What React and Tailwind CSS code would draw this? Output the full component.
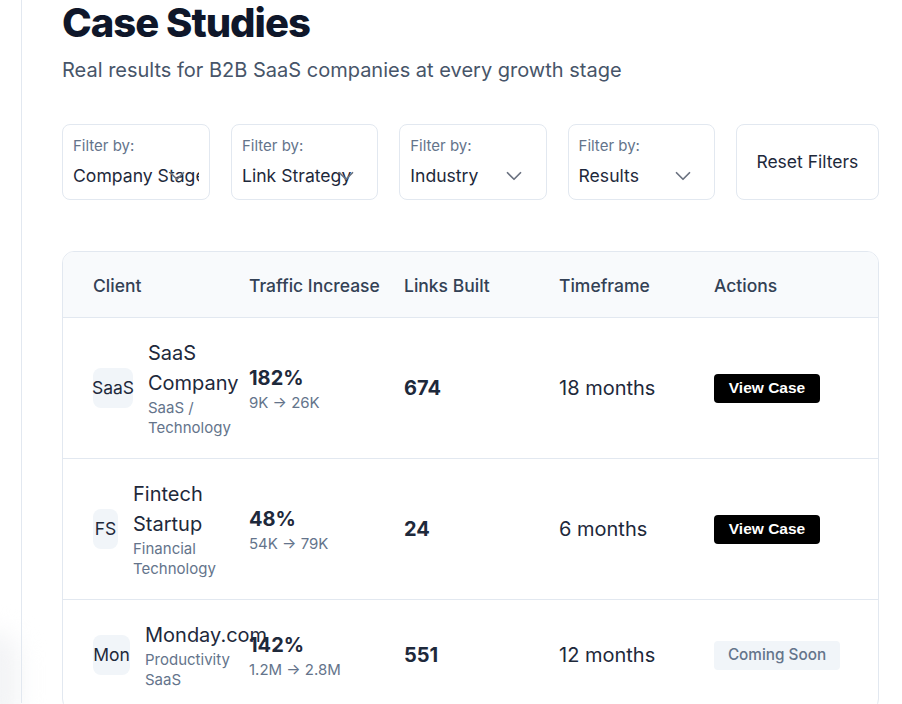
import { ChevronDown } from "lucide-react";

const filters = [
  { label: "Filter by:", value: "Company Stage" },
  { label: "Filter by:", value: "Link Strategy" },
  { label: "Filter by:", value: "Industry" },
  { label: "Filter by:", value: "Results" },
];

const rows = [
  {
    logo: "SaaS",
    logoW: "w-10",
    name: "SaaS Company",
    sector: "SaaS / Technology",
    traffic: "182%",
    range: "9K → 26K",
    links: "674",
    time: "18 months",
    ready: true,
  },
  {
    logo: "FS",
    logoW: "w-[25px]",
    name: "Fintech Startup",
    sector: "Financial Technology",
    traffic: "48%",
    range: "54K → 79K",
    links: "24",
    time: "6 months",
    ready: true,
  },
  {
    logo: "Mon",
    logoW: "w-[37px]",
    name: "Monday.com",
    sector: "Productivity SaaS",
    traffic: "142%",
    range: "1.2M → 2.8M",
    links: "551",
    time: "12 months",
    ready: false,
  },
];

const cols = "grid grid-cols-[156px_155px_155px_155px_1fr]";

function FilterBox({ label, value }) {
  return (
    <div className="w-[148px] h-[76px] rounded-lg border border-[#e2e8f0] bg-white px-[10px] pt-[11px]">
      <p className="text-[15px] leading-5 text-[#64748b]">{label}</p>
      <div className="relative mt-[8px]">
        <p className="text-[17.6px] leading-6 text-[#1e293b] whitespace-nowrap overflow-hidden">
          {value}
        </p>
        <ChevronDown
          className="absolute -top-px left-[91px] w-[26px] h-[26px] text-[#6b7280]"
          strokeWidth={1.6}
        />
      </div>
    </div>
  );
}

function CaseRow({ row, last }) {
  return (
    <div className={`${cols} items-center pl-[30px] py-5 ${last ? "" : "border-b border-[#e2e8f0]"}`}>
      {/* Client */}
      <div className="flex items-center gap-[15px] pr-[8px]">
        <div
          className={`${row.logoW} h-10 shrink-0 rounded-lg bg-[#f1f5f9] flex items-center justify-center text-[17.5px] text-[#1e293b] whitespace-nowrap`}
        >
          {row.logo}
        </div>
        <div className="min-w-0">
          <p className="text-[20px] leading-[30px] text-[#1e293b]">{row.name}</p>
          <p className="text-[15px] leading-5 text-[#64748b] w-[90px]">{row.sector}</p>
        </div>
      </div>

      {/* Traffic */}
      <div>
        <p className="text-[20px] leading-[30px] font-bold text-[#1e293b]">{row.traffic}</p>
        <p className="text-[15px] leading-5 text-[#64748b]">{row.range}</p>
      </div>

      <p className="text-[20px] font-bold text-[#1e293b]">{row.links}</p>
      <p className="text-[20px] text-[#1e293b]">{row.time}</p>

      <div>
        {row.ready ? (
          <button className="h-[29px] w-[106px] rounded-[4px] bg-black text-white text-[15.5px] font-bold font-['Liberation_Sans',sans-serif]">
            View Case
          </button>
        ) : (
          <span className="inline-flex items-center justify-center h-[29px] w-[126px] rounded-[4px] bg-[#f1f5f9] text-[15.3px] font-medium text-[#64748b]">
            Coming Soon
          </span>
        )}
      </div>
    </div>
  );
}

export default function App() {
  return (
    <div className="relative w-[902px] h-[704px] overflow-hidden bg-white font-['Inter',sans-serif]">
      {/* faint shadow at the corner */}
      <div className="absolute -left-[40px] top-[630px] w-[60px] h-[100px] rounded-full bg-[#f3f4f6] blur-md" />

      <div className="relative ml-[21px] h-full border-l border-[#e2e8f0] pl-[40px] pr-[23px]">
        <h1 className="-mt-px text-[40px] leading-[48px] font-extrabold tracking-tight text-[#0f172a]">
          Case Studies
        </h1>
        <p className="mt-[9px] text-[20px] leading-7 text-[#475569]">
          Real results for B2B SaaS companies at every growth stage
        </p>

        <div className="mt-[40px] flex gap-[21px]">
          {filters.map((f) => (
            <FilterBox key={f.value} {...f} />
          ))}
          <button className="w-[144px] h-[76px] rounded-lg border border-[#e2e8f0] bg-white pt-px text-[17.5px] text-[#1e293b]">
            Reset Filters
          </button>
        </div>

        <div className="mt-[51px] rounded-xl border border-[#e2e8f0] overflow-hidden">
          <div className={`${cols} items-center h-[66px] pl-[30px] pt-[3px] bg-[#f8fafc] border-b border-[#e2e8f0] text-[17.5px] font-medium text-[#334155]`}>
            <span>Client</span>
            <span>Traffic Increase</span>
            <span>Links Built</span>
            <span>Timeframe</span>
            <span>Actions</span>
          </div>
          {rows.map((r, i) => (
            <CaseRow key={r.name} row={r} last={i === rows.length - 1} />
          ))}
        </div>
      </div>
    </div>
  );
}
